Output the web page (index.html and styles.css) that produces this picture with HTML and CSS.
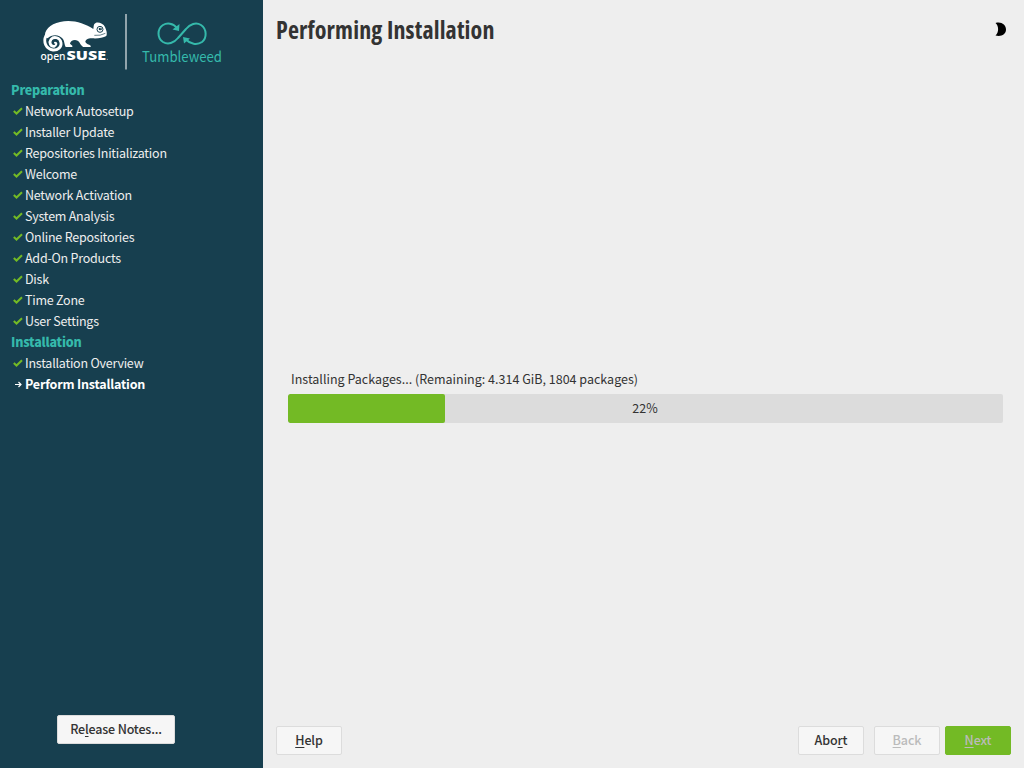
FILE: index.html
```html
<!DOCTYPE html>
<html lang="en">
<head>
<meta charset="utf-8">
<title>Performing Installation</title>
<link rel="stylesheet" href="styles.css">
</head>
<body>
<div class="installer">
  <aside class="sidebar">
    <svg class="brand" viewBox="0 0 263 80" width="263" height="80" aria-label="openSUSE Tumbleweed">
      <g transform="translate(30 5) scale(.33333)">
        <path fill="#fff" d="M46 97C40 78 60 57 90 51C125 42 162 54 190 72C192 63 190 57 197 54C205 50 220 56 225 66C230 77 232 86 229 93C219 99 203 101 187 100C176 99 166 104 166 111C169 118 177 118 182 122V126H163C153 126 152 113 143 107C131 102 121 109 120 116L127 122V126H107C103 120 104 109 99 102C88 87 65 87 53 100Z"/>
        <path fill="none" stroke="#fff" stroke-width="8.500" stroke-linecap="round" d="M48 92C39 110 47 131 69 135C84 136 95 126 93 113C90 97 72 93 63 103C56 113 62 125 72 124"/>
        <path fill="none" stroke="#fff" stroke-width="6" stroke-linecap="round" d="M72 124C80 122 81 113 75 113"/>
        <circle cx="210" cy="73" r="9" fill="#fff" stroke="#173f4f" stroke-width="3"/>
        <ellipse cx="211" cy="72" rx="5" ry="4" fill="#173f4f"/><circle cx="213" cy="71" r="1.500" fill="#fff"/>
        <path fill="none" stroke="#173f4f" stroke-width="2" d="M193 91Q211 93 226 85"/>
      </g>
      <text class="logo-open" x="40.5" y="60" textLength="25" lengthAdjust="spacingAndGlyphs">open</text>
      <text class="logo-suse" x="66.5" y="60" textLength="39.5" lengthAdjust="spacingAndGlyphs">SUSE</text>
      <circle cx="107.3" cy="59.3" r=".6" fill="#a3b1b9"/>
      <path stroke="#a8b7bd" stroke-width="1.7" d="M126 14V69.5"/>
      <path fill="none" stroke="#35b9ab" stroke-width="2" d="M177 28C173 23 167 22.500 163 25C157 29 157 38 163 42C168 45 174 43 178 38L186 29C190 24 196 22 201 25C207 29 207 38 202 42C197 45.500 190 44 186 39.500"/>
      <path fill="#35b9ab" d="M179.500 24L179 31L172.500 29.500ZM183 37L190 38.500L184 43.500Z"/>
      <text class="logo-product" x="142" y="61.500" textLength="80" lengthAdjust="spacingAndGlyphs">Tumbleweed</text>
    </svg>
    <ul class="steps">
      <li class="heading">Preparation</li>
      <li><svg class="mark"><use href="#check"/></svg>Network Autosetup</li>
      <li><svg class="mark"><use href="#check"/></svg>Installer Update</li>
      <li><svg class="mark"><use href="#check"/></svg>Repositories Initialization</li>
      <li><svg class="mark"><use href="#check"/></svg>Welcome</li>
      <li><svg class="mark"><use href="#check"/></svg>Network Activation</li>
      <li><svg class="mark"><use href="#check"/></svg>System Analysis</li>
      <li><svg class="mark"><use href="#check"/></svg>Online Repositories</li>
      <li><svg class="mark"><use href="#check"/></svg>Add-On Products</li>
      <li><svg class="mark"><use href="#check"/></svg>Disk</li>
      <li><svg class="mark"><use href="#check"/></svg>Time Zone</li>
      <li><svg class="mark"><use href="#check"/></svg>User Settings</li>
      <li class="heading">Installation</li>
      <li><svg class="mark"><use href="#check"/></svg>Installation Overview</li>
      <li class="current"><svg class="mark"><path fill="none" stroke="#fff" stroke-width="1.200" d="M4 7.500H10M7.500 5L10 7.500L7.500 10"/></svg>Perform Installation</li>
    </ul>
    <button class="button release">Re<u>l</u>ease Notes...</button>
  </aside>
  <main class="content">
    <header class="top">
      <h1 class="title">Performing Installation</h1>
      <svg class="moon" width="14" height="16" viewBox="0 0 14 16"><path d="M1.500 2C7 .200 12 3.500 12 8.500S7 16 1.500 14.500C5 12 5 4.500 1.500 2Z"/></svg>
    </header>
    <section class="progress">
      <p class="status">Installing Packages... (Remaining: 4.314 GiB, 1804 packages)</p>
      <div class="bar"><div class="fill" style="width:22%"></div><span class="percent">22%</span></div>
    </section>
    <footer class="actions">
      <button class="button"><u>H</u>elp</button>
      <button class="button abort">Abo<u>r</u>t</button>
      <button class="button disabled"><u>B</u>ack</button>
      <button class="button next"><u>N</u>ext</button>
    </footer>
  </main>
</div>
<svg width="0" height="0" class="symbols"><symbol id="check" viewBox="0 0 14 14"><path fill="none" stroke="#73ba25" stroke-width="2.100" d="M2.800 7L5.500 9.500L11 4.300"/></symbol></svg>
</body>
</html>
```
FILE: styles.css
```css
* { box-sizing: border-box; }
body { margin: 0; font: 12.5px/21px "Noto Sans CJK SC", "Noto Sans", sans-serif; color: #333; }
.installer { display: flex; width: 1024px; height: 768px; overflow: hidden; }
.symbols { position: absolute; }
.sidebar { display: flex; flex-direction: column; width: 263px; background: #173f4f; }
.brand { display: block; flex: none; }
.logo-open { font: 500 11px/11px "Noto Sans", sans-serif; fill: #fff; }
.logo-suse { font: 800 12px/12px "Open Sans", sans-serif; fill: #fff; }
.logo-product { font: 14.5px "Noto Sans CJK SC", sans-serif; fill: #35b9ab; }
.steps { list-style: none; margin: -1px 0 0; padding: 0 0 0 11px; color: #eee; letter-spacing: -.23px; }
.steps li { display: flex; height: 21px; white-space: nowrap; }
.steps .heading { color: #35b9ab; font-weight: 900; letter-spacing: -.2px; }
.steps .current { color: #fff; font-weight: 700; letter-spacing: -.18px; }
.mark { width: 14px; height: 14px; margin-top: 4px; flex: none; }
.button { width: 66px; height: 29px; padding: 0 0 2px; border: 1px solid #dcdcdc; border-radius: 2px; background: #f6f6f6; color: #333; font: 500 12.5px/21px "Noto Sans CJK SC", sans-serif; letter-spacing: -.1px; }
.button u { text-underline-offset: 2px; text-decoration-thickness: 1px; text-decoration-skip-ink: none; }
.release { width: 118px; margin: auto 0 24px 57px; letter-spacing: -.17px; }
.content { display: flex; flex-direction: column; flex: 1; padding: 0 13px; background: #eee; }
.top { display: flex; justify-content: space-between; height: 60px; padding: 14px 3px 0 0; }
.title { margin: 0; font: 700 24px/32px "Open Sans", sans-serif; font-stretch: 75%; letter-spacing: .14px; white-space: nowrap; }
.moon { margin-top: 7px; }
.progress { flex: 1; padding: 308px 8px 0 12px; }
.status { margin: 0 0 5px 3px; letter-spacing: .01px; }
.bar { display: grid; height: 29px; border-radius: 2px; background: #dcdcdc; overflow: hidden; align-items: center; }
.fill { grid-area: 1 / 1; height: 29px; background: #73ba25; border-radius: 2px; }
.percent { grid-area: 1 / 1; padding: 0 1px 2px 0; text-align: center; }
.actions { display: flex; height: 42px; }
.abort { margin-left: auto; margin-right: 10px; }
.disabled { margin-right: 5px; color: #bbb; }
.next { background: #73ba25; border-color: #73ba25; color: #bbb; }
```
